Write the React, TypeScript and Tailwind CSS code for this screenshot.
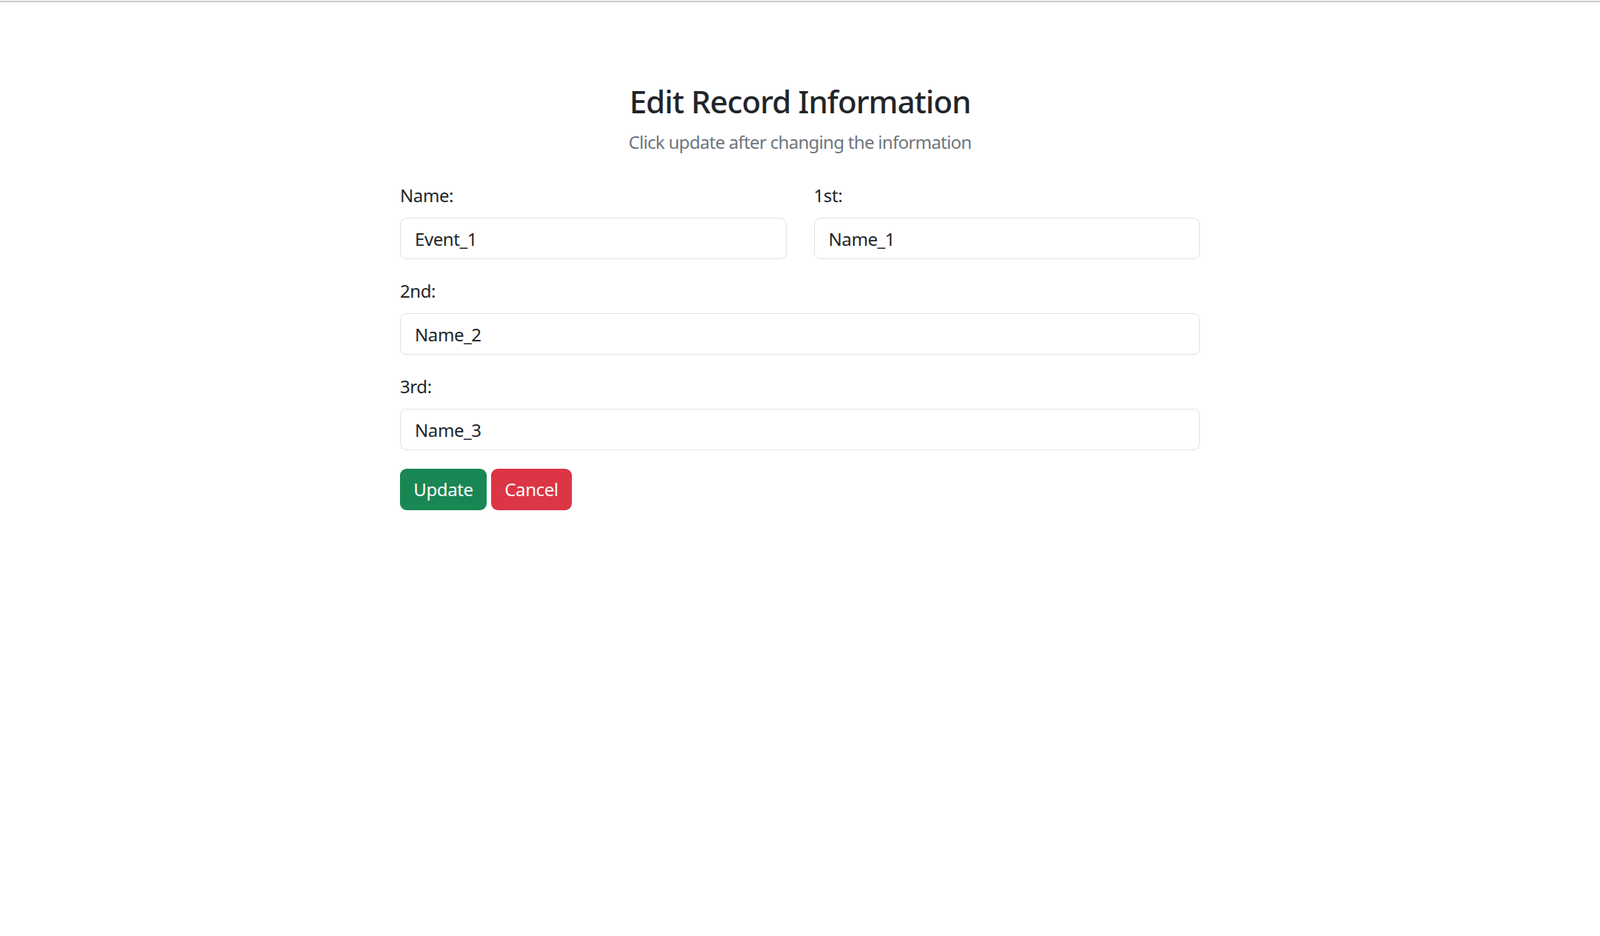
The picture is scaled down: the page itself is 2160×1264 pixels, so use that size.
import { useState } from 'react'

const fields = [
  { id: 'name', label: 'Name:', value: 'Event_1' },
  { id: 'first', label: '1st:', value: 'Name_1' },
  { id: 'second', label: '2nd:', value: 'Name_2' },
  { id: 'third', label: '3rd:', value: 'Name_3' },
]

function Field({ label, value, onChange }: { label: string; value: string; onChange: (v: string) => void }) {
  return (
    <div className="mb-[25px]">
      <label className="mb-[12px] block text-[24px] leading-[36px] text-[#212529]">{label}</label>
      <input
        className="block h-[56px] w-full rounded-[9px] border border-[#dee2e6] bg-white px-[19px] text-[24px] text-[#212529] outline-none focus:border-[#86b7fe]"
        value={value}
        onChange={e => onChange(e.target.value)}
      />
    </div>
  )
}

export default function App() {
  const [values, setValues] = useState<Record<string, string>>(
    Object.fromEntries(fields.map(f => [f.id, f.value]))
  )
  const set = (id: string) => (v: string) => setValues(prev => ({ ...prev, [id]: v }))

  return (
    <div className="min-h-screen bg-white font-['Noto_Sans',sans-serif] text-[#212529]">
      <div className="mt-px h-[2px] bg-[#cccccc]" />
      <div className="mx-auto w-[1080px] pt-[109px]">
        <h3 className="text-center text-[42px] font-medium leading-[50px] tracking-[-0.9px]">
          Edit Record Information
        </h3>
        <p className="mt-[12px] text-center text-[24px] leading-[36px] tracking-[-0.7px] text-[#6c757d]">
          Click update after changing the information
        </p>
        <form className="mt-[36px] tracking-[-0.4px]" onSubmit={e => e.preventDefault()}>
          <div className="grid grid-cols-2 gap-x-[37px]">
            <Field label={fields[0].label} value={values.name} onChange={set('name')} />
            <Field label={fields[1].label} value={values.first} onChange={set('first')} />
          </div>
          <Field label={fields[2].label} value={values.second} onChange={set('second')} />
          <Field label={fields[3].label} value={values.third} onChange={set('third')} />
          <div className="flex gap-[6px]">
            <button
              type="submit"
              className="h-[56px] w-[117px] rounded-[9px] bg-[#198754] text-[24px] text-white"
            >
              Update
            </button>
            <button
              type="button"
              className="h-[56px] w-[109px] rounded-[9px] bg-[#dc3545] text-[24px] text-white"
            >
              Cancel
            </button>
          </div>
        </form>
      </div>
    </div>
  )
}
